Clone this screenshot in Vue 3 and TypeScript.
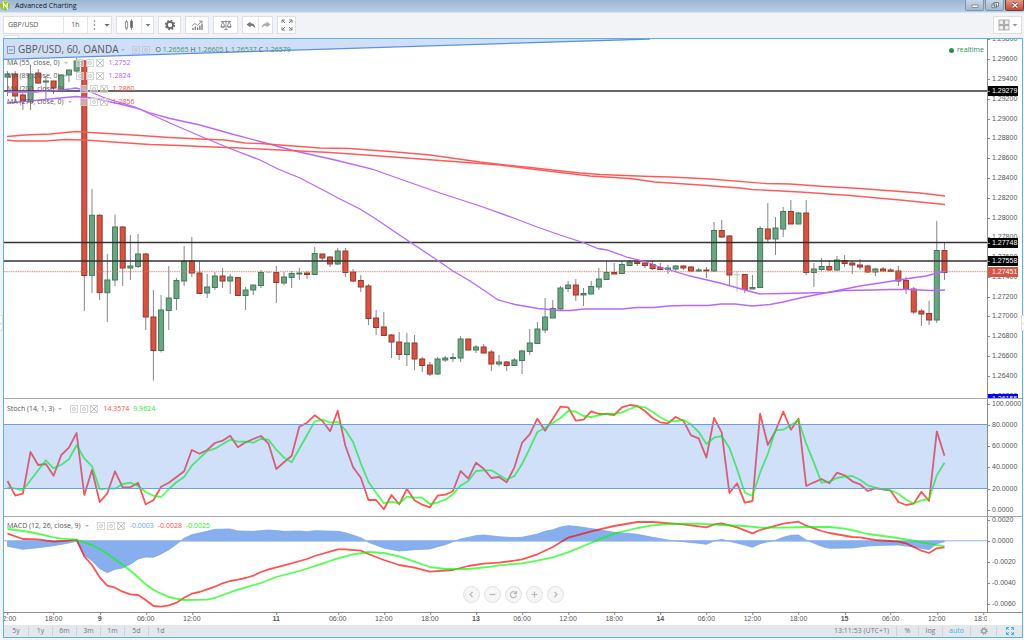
<script setup lang="ts">
import { ref } from 'vue'

type Point = [number, number]
type Candle = [number, number, number, number, 'g' | 'r' | 'n']

const BAR = 7.68
const FIRST = 7.5
const xOf = (i: number): number => FIRST + i * BAR

// high, body top, body bottom, low, colour
const candles: Candle[] = [
  [71, 74, 77, 96, 'g'], [71, 74, 96, 103, 'r'], [93, 95, 101, 110, 'r'], [65, 74, 102, 110, 'g'],
  [69, 73, 83, 84, 'r'], [76, 81, 82, 99, 'g'], [81, 81, 88, 94, 'r'], [74, 75, 89, 90, 'g'],
  [70, 70, 75, 82, 'g'], [58, 61, 71, 77, 'g'], [60, 61, 275.5, 311, 'r'], [189, 215.3, 275.3, 293, 'g'],
  [214, 215.3, 292.6, 300, 'r'], [254, 280, 292.7, 322, 'g'], [214.5, 227, 280, 286, 'g'], [226, 227, 268, 286, 'r'],
  [235, 266, 268, 280, 'g'], [234, 254, 266.5, 268, 'g'], [253, 254, 317, 330, 'r'], [290, 317, 350.5, 380.5, 'r'],
  [295, 310, 350.5, 352.5, 'g'], [266, 298, 310.5, 330, 'g'], [278, 280.5, 298.5, 310, 'g'], [246, 261, 281, 286, 'g'],
  [237, 261, 273, 277, 'r'], [261, 273, 293.5, 294, 'r'], [274, 287, 293, 298, 'g'], [272, 276, 287.5, 290, 'g'],
  [268, 276, 281, 288, 'r'], [274, 277, 281, 294, 'g'], [277, 277.5, 295.5, 296, 'r'], [287, 290, 295.5, 310, 'g'],
  [285, 285, 290, 295, 'g'], [270, 272.5, 285.5, 288, 'g'], [272, 272, 272.5, 273, 'n'], [266, 272.5, 282.5, 303, 'r'],
  [272, 277, 283, 285, 'g'], [271, 273.5, 277.5, 288, 'g'], [268, 273, 274, 280, 'g'], [271, 273, 274.5, 279, 'r'],
  [247, 253.5, 274.5, 275, 'g'], [254, 254, 258, 261, 'r'], [256, 257, 264, 267, 'r'], [248, 251, 264, 265, 'g'],
  [248, 251, 272.5, 277, 'r'], [269, 272, 281, 282, 'r'], [275, 280.5, 287, 292, 'r'], [284, 286, 318.5, 325, 'r'],
  [310, 318, 327.5, 335, 'r'], [312, 327, 335.5, 336, 'r'], [334, 335, 342, 358, 'r'], [332, 342, 354.5, 360, 'r'],
  [333, 343, 354.5, 366, 'g'], [335, 343, 359, 370, 'r'], [357, 359, 365.5, 372, 'r'], [362, 365, 374, 376, 'r'],
  [357, 359, 374, 375, 'g'], [356, 358, 360, 362, 'g'], [353, 357.5, 358.5, 362, 'g'], [336, 339, 358, 362, 'g'],
  [339, 339, 350, 350, 'r'], [345, 347, 350, 353, 'g'], [344, 347, 353, 353, 'r'], [350, 352, 364, 371, 'r'],
  [355, 362, 364, 366.5, 'g'], [361, 362, 365.5, 371, 'r'], [358, 360, 365.5, 366, 'g'], [350, 351, 360.5, 374, 'g'],
  [329, 343, 351.5, 355, 'g'], [322, 329, 343.5, 344, 'g'], [298, 317, 330, 333, 'g'], [300, 308.5, 318, 318, 'g'],
  [286, 288, 309, 311, 'g'], [281, 285, 288.5, 292, 'g'], [279, 285, 295, 301, 'r'], [288, 293.5, 295, 306, 'g'],
  [281, 286.5, 294, 294, 'g'], [268, 279, 287, 290, 'g'], [261, 272.5, 279.5, 280, 'g'], [263, 272.5, 274, 274, 'r'],
  [261, 264.5, 273.5, 274, 'g'], [260, 262, 265.5, 266, 'g'], [260, 262, 263.5, 266, 'r'], [261, 263, 265.5, 268, 'r'],
  [261, 264.5, 268.5, 270, 'r'], [263, 267.5, 269.5, 270, 'r'], [265, 268, 269.5, 274, 'g'], [265, 266, 269, 272, 'g'],
  [265, 266, 268, 270, 'r'], [266, 267, 271, 272, 'r'], [268, 270, 271, 272, 'g'], [267, 270, 271, 278, 'r'],
  [222, 230.5, 271, 272, 'g'], [220, 230.5, 237, 238, 'r'], [235, 236, 275, 285, 'r'], [271, 274.5, 275, 292, 'n'],
  [274, 274.5, 289.5, 293, 'r'], [275, 287.5, 289, 289, 'g'], [226, 228.5, 287.5, 288, 'g'], [203, 229, 239, 242, 'r'],
  [217, 228, 239, 255, 'g'], [207, 211.5, 229, 237, 'g'], [200, 211.5, 224, 224, 'r'], [212, 213, 224, 224, 'g'],
  [200, 213, 272.5, 275, 'r'], [263, 269, 272.5, 287, 'g'], [258, 266.5, 269.5, 271, 'g'], [260, 266.5, 270, 271, 'r'],
  [256, 260, 270, 271, 'g'], [255, 260.5, 263.5, 267, 'r'], [261, 263, 265, 274, 'r'], [259, 265, 267, 270, 'r'],
  [265, 266, 272, 273, 'r'], [268, 269, 272, 276, 'g'], [267, 269, 271, 271, 'r'], [268, 270, 271.5, 272, 'r'],
  [266, 271, 281, 286, 'r'], [277, 280.5, 289.5, 294, 'r'], [287, 289, 312, 314, 'r'], [309, 311, 314, 326, 'r'],
  [301, 313.5, 320, 325, 'r'], [221, 250.5, 320, 323, 'g'], [243, 250.5, 272.5, 280, 'r'],
]

const averages: { tone: string; points: string }[] = [
  { tone: 'purple', points: '7,92 35,92 62,90 76,88 88,91 105,98 135,107 150,114 170,123 200,136 230,148.5 260,160 278,169 300,178 325,191 338,198 360,209 376,219 392,230 410,242 437,260 453,271 470,281 485,291 498,300 515,304.5 538,308.5 560,310.5 570,310.5 584,309 622,309 637,307.5 654,307.5 668,306 684,305.5 708,305.5 721,304 735,304 752,306 770,304.5 783,302 800,298 820,294 840,290 860,286 880,283 905,279 926,276 937,273 945,271.5' },
  { tone: 'purple', points: '7,103 30,101 50,99 76,96.5 95,98.5 120,104 140,109 150,113 170,118.5 200,125 230,133.5 260,141.5 295,151 335,160 372,169 400,179 440,193 480,206 515,218.5 537,227 560,235 583,242.5 598,248.5 607,250 628,257.5 645,261.5 660,267 690,276 720,283 745,290 760,294 783,293.5 828,292.5 843,290.5 875,290 890,289.5 910,289.5 930,290.5 945,290' },
  { tone: 'red', points: '7,136.5 25,135 50,134 76,131.5 90,132.5 125,134.5 170,137.5 200,139 225,140 245,143 260,143.5 320,148 350,148.5 390,151.5 430,155 480,162 530,167.5 580,173 600,174.5 650,176.5 670,177 710,179 766,183.5 790,184 825,186.5 860,188.5 920,193 945,196' },
  { tone: 'red', points: '7,140 15,141 45,141 65,139.5 85,140 120,142.5 150,144.5 180,145.5 200,146.5 240,148 260,149 330,152.5 380,156 440,160.5 500,165 540,170 590,176 630,178.5 655,182 700,185 740,188 752,189.5 800,192 850,195.5 900,200 930,203 945,204.5' },
]

// Indicator samples are stored at three steps per unit below y = 395.
const yOf = (v: number): number => 395 + v / 3
const lineOf = (pts: Point[]): string => pts.map(([i, v]) => `${xOf(i).toFixed(1)},${yOf(v).toFixed(1)}`).join(' ')
const indexed = (values: number[]): Point[] => values.map((v, i): Point => [i, v])

const stochK = lineOf(indexed([
  258, 302, 296, 171, 210, 207, 242, 180, 158, 114, 300, 225, 321, 295, 229, 277, 277, 263, 328, 316,
  275, 263, 246, 229, 165, 176, 165, 144, 137, 122, 157, 142, 132, 123, 146, 222, 202, 182, 95, 83,
  61, 78, 109, 47, 152, 217, 248, 315, 315, 343, 300, 328, 282, 316, 329, 337, 302, 299, 289, 228,
  251, 203, 221, 249, 246, 262, 217, 143, 118, 71, 107, 71, 35, 37, 77, 74, 49, 57, 57, 60,
  37, 30, 33, 48, 69, 82, 85, 66, 77, 121, 130, 188, 69, 112, 294, 265, 323, 318, 56, 150,
  108, 50, 104, 71, 273, 262, 252, 265, 233, 241, 259, 268, 288, 280, 283, 287, 321, 330, 326, 290,
  318, 109, 182,
]))
const stochD = lineOf(indexed([
  278, 281, 285, 256, 226, 196, 220, 209, 193, 151, 190, 214, 283, 281, 281, 267, 263, 273, 291, 302,
  306, 282, 262, 246, 212, 190, 168, 161, 148, 134, 140, 140, 143, 132, 134, 164, 188, 202, 161, 121,
  79, 74, 83, 80, 105, 141, 205, 261, 293, 325, 320, 325, 305, 308, 308, 327, 323, 314, 298, 272,
  258, 228, 226, 226, 239, 254, 243, 207, 160, 111, 99, 83, 69, 48, 50, 63, 66, 61, 56, 57,
  52, 42, 34, 37, 51, 67, 79, 78, 75, 88, 111, 147, 128, 123, 158, 223, 293, 303, 233, 177,
  106, 104, 91, 75, 146, 203, 263, 260, 249, 245, 243, 254, 271, 278, 283, 286, 296, 314, 325, 316,
  312, 241, 203,
]))

const macd = lineOf([
  [0, 416], [2, 432], [4, 433], [6, 440], [8, 437], [9, 434], [10, 484], [11, 510], [12, 547], [13, 572], [14, 578],
  [15, 590], [16, 598], [17, 600], [18, 615], [19, 633], [20, 635], [21, 631], [22, 623], [23, 608], [24, 596],
  [25, 591], [26, 583], [27, 575], [28, 565], [29, 558], [30, 554], [31, 549], [32, 542], [33, 531], [34, 523],
  [36, 511], [39, 492], [40, 483], [43, 463], [44, 463], [46, 467], [47, 477], [49, 495], [51, 510], [53, 518],
  [55, 530], [58, 525], [60, 513], [62, 506], [64, 503], [66, 497], [67, 493], [69, 478], [71, 456], [73, 428],
  [74, 422], [76, 409], [79, 393], [82, 381], [84, 381], [88, 388], [89, 391], [91, 397], [92, 388], [93, 385],
  [95, 397], [97, 415], [98, 405], [101, 386], [103, 380], [104, 392], [106, 408], [107, 414], [110, 426],
  [111, 427], [113, 435], [116, 440], [117, 445], [119, 467], [120, 474], [121, 460], [122, 457],
])
const signal = lineOf([
  [0, 402], [3, 411], [6, 427], [7, 431], [9, 434], [10, 442], [11, 450], [12, 462], [13, 476], [14, 493], [15, 509],
  [16, 527], [17, 547], [18, 568], [19, 584], [20, 596], [21, 606], [22, 611], [23, 615], [26, 614], [27, 609],
  [28, 600], [30, 584], [33, 564], [35, 546], [38, 528], [41, 506], [43, 490], [45, 478], [47, 471], [49, 474],
  [51, 484], [53, 500], [55, 516], [57, 522], [60, 522], [63, 515], [64, 511], [67, 505], [69, 497], [71, 487],
  [73, 472], [75, 453], [77, 434], [79, 416], [82, 399], [84, 391], [86, 387], [90, 386], [93, 390], [96, 393],
  [98, 398], [101, 398], [104, 396], [107, 396], [109, 401], [111, 411], [112, 417], [115, 426], [118, 437],
  [119, 442], [120, 446], [122, 454],
])
const histogram = lineOf([
  [0, 438], [0, 454], [2, 463], [4, 458], [6, 452], [8, 444], [9, 439], [10, 481], [11, 497], [12, 521], [13, 533],
  [14, 523], [15, 519], [16, 508], [17, 492], [18, 486], [19, 487], [20, 477], [21, 464], [22, 448], [23, 430],
  [24, 419], [26, 409], [27, 403], [29, 402], [30, 408], [32, 409], [34, 405], [36, 409], [38, 408], [39, 410],
  [40, 407], [43, 409], [44, 413], [46, 428], [47, 442], [49, 459], [51, 468], [53, 464], [55, 462], [56, 455],
  [57, 449], [58, 440], [59, 432], [61, 422], [62, 420], [64, 425], [66, 428], [67, 427], [69, 417], [70, 409],
  [71, 404], [72, 396], [73, 392], [74, 394], [77, 404], [79, 412], [82, 418], [84, 427], [86, 435], [87, 438],
  [88, 440], [90, 445], [91, 448], [92, 438], [93, 433], [94, 439], [96, 450], [97, 457], [98, 446], [99, 440],
  [100, 436], [101, 427], [102, 421], [103, 420], [104, 435], [105, 445], [106, 454], [107, 460], [110, 459],
  [112, 453], [114, 451], [116, 450], [118, 456], [120, 464], [121, 446], [122, 440], [122, 438],
])

interface Tick { text: string; at: number }
const MAIN = { top: 39, height: 359 }
const STOCH = { top: 399, height: 117 }
const MACD = { top: 517, height: 95 }
const pct = (y: number, pane: { top: number; height: number }) => ({ top: `${((y - pane.top) / pane.height) * 100}%` })

const priceTicks: Tick[] = Array.from({ length: 19 }, (_, k) => ({
  text: (1.298 - k * 0.002).toFixed(5),
  at: 39.5 + k * 19.78,
}))
const tags = [
  { text: '1.29279', at: 91, tone: 'black' },
  { text: '1.27748', at: 242.5, tone: 'black' },
  { text: '1.27558', at: 261, tone: 'black' },
  { text: '1.27451', at: 272, tone: 'last' },
  { text: '1.26155', at: 399, tone: 'blue' },
]
const stochTicks: Tick[] = [
  { text: '100.0000', at: 403.5 }, { text: '80.0000', at: 424.7 }, { text: '60.0000', at: 446 },
  { text: '40.0000', at: 467.4 }, { text: '20.0000', at: 488.6 }, { text: '0.0000', at: 510 },
]
const macdTicks: Tick[] = [
  { text: '0.0020', at: 519.5 }, { text: '0.0000', at: 540.8 }, { text: '-0.0020', at: 562 },
  { text: '-0.0040', at: 583 }, { text: '-0.0060', at: 604.3 },
]
const times: { text: string; bar: number; day?: boolean }[] = [
  { text: '12:00', bar: 0 }, { text: '18:00', bar: 6 }, { text: '9', bar: 12, day: true }, { text: '06:00', bar: 18 },
  { text: '12:00', bar: 24 }, { text: '11', bar: 35, day: true }, { text: '06:00', bar: 43 }, { text: '12:00', bar: 49 },
  { text: '18:00', bar: 55 }, { text: '13', bar: 61, day: true }, { text: '06:00', bar: 67 }, { text: '12:00', bar: 73 },
  { text: '18:00', bar: 79 }, { text: '14', bar: 85, day: true }, { text: '06:00', bar: 91 }, { text: '12:00', bar: 97 },
  { text: '18:00', bar: 103 }, { text: '15', bar: 109, day: true }, { text: '06:00', bar: 115 }, { text: '12:00', bar: 121 },
  { text: '18:00', bar: 127 },
]
const timeLeft = (bar: number) => ({ left: `${((xOf(bar) - 4) / 983) * 100}%` })

const studies = [
  { name: 'MA (55, close, 0)', value: '1.2752', tone: 'purple' },
  { name: 'MA (89, close, 0)', value: '1.2824', tone: 'purple' },
  { name: 'MA (200, close, 0)', value: '1.2860', tone: 'red' },
  { name: 'MA (279, close, 0)', value: '1.2856', tone: 'red' },
]
const ohlc = [['O', '1.26565'], ['H', '1.26605'], ['L', '1.26537'], ['C', '1.26579']]
const icons = ['eye', 'gear', 'close']
const ranges = ['5y', '1y', '6m', '3m', '1m', '5d', '1d']
const nav = [
  { name: 'Scroll left', d: 'M9.5 6 7 8.500l2.500 2.500' },
  { name: 'Zoom out', d: 'M5.500 8.500h6' },
  { name: 'Reset', d: 'M11 7.200A3 3 0 1 0 11.300 9.500M11.400 5v2.600H8.800' },
  { name: 'Zoom in', d: 'M5.500 8.500h6M8.500 5.500v6' },
  { name: 'Scroll right', d: 'M7.500 6 10 8.500 7.500 11' },
]
const symbol = ref('GBP/USD')
</script>

<template>
  <div class="window">
    <header class="titlebar">
      <svg class="logo" viewBox="0 0 12 12" aria-hidden="true">
        <circle cx="5" cy="5.500" r="4.800" fill="#8fc31f" />
        <path d="M1 3.500C3 1 7 .5 9 3" fill="none" stroke="#c9e67a" />
        <path d="M3.500 8.500V3.200l3.600 5V3" fill="none" stroke="#fff" stroke-width="1.300" />
      </svg>
      <h1>Advanced Charting</h1>
      <div class="controls">
        <button type="button" aria-label="Minimize"><svg viewBox="0 0 18 10"><rect x="6" y="5" width="6" height="2.500" rx=".5" fill="#fff" stroke="#56667a" stroke-width=".7" /></svg></button>
        <button type="button" aria-label="Restore"><svg viewBox="0 0 18 10"><path d="M8 2.500h4.500v3.700H8zM6 4h4.500v3.700H6z" fill="#fff" stroke="#56667a" stroke-width=".8" /><path d="M7.500 5.800h1.600" stroke="#56667a" /></svg></button>
        <button type="button" class="shut" aria-label="Close"><svg viewBox="0 0 18 10"><path d="m6.500 3 5 4.500m0-4.500-5 4.500" stroke="#6b2c28" stroke-width="2.600" /><path d="m6.500 3 5 4.500m0-4.500-5 4.500" stroke="#fff" stroke-width="1.500" /></svg></button>
      </div>
    </header>

    <div class="toolbar">
      <div class="group">
        <input v-model="symbol" class="symbol" type="text" aria-label="Symbol" />
        <button type="button" class="w24">1h</button>
        <button type="button" class="w24" aria-label="Intervals">
          <svg viewBox="0 0 22 16" width="22" height="16"><g fill="#666"><circle cx="5.500" cy="4" r=".8" /><circle cx="5.500" cy="8" r=".8" /><circle cx="5.500" cy="12" r=".8" /><path d="M15.500 7h5L18 9.500z" /></g></svg>
        </button>
      </div>
      <div class="group">
        <button type="button" class="w24" aria-label="Bar style">
          <svg viewBox="0 0 12 12" width="12" height="12"><path d="M3.500 1v10M8.500 0v11" stroke="#777" stroke-width=".8" /><rect x="2.300" y="3" width="2.400" height="6" fill="#fff" stroke="#777" stroke-width=".8" /><rect x="7.200" y="1.800" width="2.600" height="7" fill="#666" /></svg>
        </button>
        <button type="button" class="w12" aria-label="More bar styles"><svg viewBox="0 0 6 6" width="6" height="6"><path d="M.5 2h5L3 4.500z" fill="#777" /></svg></button>
      </div>
      <div class="group">
        <button type="button" class="w21" aria-label="Properties">
          <svg viewBox="0 0 12 12" width="12" height="12"><circle cx="6" cy="6" r="3.100" fill="none" stroke="#666" stroke-width="1.800" /><circle cx="6" cy="6" r="4.500" fill="none" stroke="#666" stroke-width="1.400" stroke-dasharray="1.800 1.734" /></svg>
        </button>
      </div>
      <div class="group">
        <button type="button" class="w22" aria-label="Indicators">
          <svg viewBox="0 0 12 12" width="12" height="12" fill="none" stroke="#777"><path d="M2 11V8.800M4.300 11V7.500M6.600 11V8.500M8.900 11V6.500M11 11V4.800" stroke-width="1.300" /><path d="m.8 7 3-2.500 2.700 2L10.500 2.500M8 2h3v2.500" stroke-width=".8" /></svg>
        </button>
      </div>
      <div class="group">
        <button type="button" class="w23" aria-label="Compare">
          <svg viewBox="0 0 12 12" width="12" height="12" fill="none" stroke="#777" stroke-width=".8"><path d="M1 2.500h10M6 1.500v9M4.300 10.500h3.400M2.800 2.500.9 7.500h3.900zM9.200 2.500 7.300 7.500h3.900z" /><path d="M.9 7.800c.6 1.300 3.200 1.300 3.900 0M7.300 7.800c.6 1.300 3.200 1.300 3.900 0" /></svg>
        </button>
      </div>
      <div class="group">
        <button type="button" class="w15" aria-label="Undo"><svg viewBox="0 0 10 8" width="10" height="8"><path d="M4.500.5.5 3.500l4 3V4.700c2 0 3.500.4 4.800 2.500C9 4 7.500 2.400 4.500 2.300z" fill="#777" /></svg></button>
        <button type="button" class="w14" aria-label="Redo"><svg viewBox="0 0 10 8" width="10" height="8"><path d="m5.500.5 4 3-4 3V4.700C3.500 4.700 2 5.100.7 7.200 1 4 2.500 2.400 5.500 2.300z" fill="#aaa" /></svg></button>
      </div>
      <div class="group">
        <button type="button" class="w17" aria-label="Full screen">
          <svg viewBox="0 0 12 12" width="12" height="12" fill="none" stroke="#777" stroke-width="1"><path d="M1 3.800V1h2.800M8.200 1H11v2.800M11 8.200V11H8.200M3.800 11H1V8.200M1 1l3 3M11 1 8 4M11 11 8 8M1 11l3-3" /></svg>
        </button>
      </div>
      <button type="button" class="layout" aria-label="Layout">
        <svg viewBox="0 0 20 12" width="20" height="12"><g fill="#eee" stroke="#999" stroke-width=".8"><rect x="1" y="1" width="4.500" height="4.500" /><rect x="6.500" y="1" width="4.500" height="4.500" /><rect x="1" y="6.500" width="4.500" height="4.500" /><rect x="6.500" y="6.500" width="4.500" height="4.500" /></g><path d="M14.500 5h5L17 7.500z" fill="#999" /></svg>
      </button>
      <span class="tab-top"></span>
    </div>

    <main class="frame">
      <section class="pane price">
        <div class="plot">
          <svg viewBox="4 39 983 359" preserveAspectRatio="none" role="img" aria-label="GBP/USD hourly candles">
            <polygon points="4,39 650,39 4,59.300" fill="#d0dff8" />
            <line x1="4" y1="59.300" x2="650" y2="39" stroke="#5e90e6" stroke-width="1.300" />
            <g v-for="(c, i) in candles" :key="i" :class="['candle', c[4]]">
              <line :x1="xOf(i)" :x2="xOf(i)" :y1="c[0]" :y2="c[3]" />
              <rect :x="xOf(i) - 2.500" :y="c[1]" width="5" :height="c[2] - c[1]" />
            </g>
            <g stroke="#333" stroke-width="1.500">
              <line x1="4" x2="987" y1="91" y2="91" />
              <line x1="4" x2="987" y1="242.500" y2="242.500" />
              <line x1="4" x2="987" y1="261" y2="261" />
            </g>
            <line x1="4" x2="987" y1="271.700" y2="271.700" stroke="#e0705f" stroke-width=".8" stroke-dasharray="1.500 .8" />
            <polyline v-for="(a, i) in averages" :key="'a' + i" :points="a.points" :class="['avg', a.tone]" />
          </svg>
          <div class="legend">
            <div class="row main">
              <svg viewBox="0 0 8 8" width="8" height="8"><rect x=".5" y=".5" width="7" height="7" fill="none" stroke="#7d879a" stroke-width=".8" /><path d="M2 4h4" stroke="#7d879a" /></svg>
              <strong>GBP/USD, 60, OANDA</strong>
              <i class="caret"></i>
              <span class="tools">
                <button v-for="k in icons.slice(0, 2)" :key="k" type="button" :aria-label="k" :class="['tool', k]"></button>
              </span>
              <span class="ohlc"><span v-for="o in ohlc" :key="o[0]">{{ o[0] }} <b>{{ o[1] }}</b></span></span>
            </div>
            <div v-for="s in studies" :key="s.name" class="row">
              <span>{{ s.name }}</span><i class="caret"></i>
              <span class="tools"><button v-for="k in icons" :key="k" type="button" :aria-label="k" :class="['tool', k]"></button></span>
              <span :class="['num', s.tone]">{{ s.value }}</span>
            </div>
          </div>
          <span class="realtime">realtime</span>
        </div>
        <div class="axis">
          <span v-for="t in priceTicks" :key="t.text" class="tick" :style="pct(t.at, MAIN)">{{ t.text }}</span>
          <span v-for="t in tags" :key="t.text" :class="['tag', t.tone]" :style="pct(t.at, MAIN)">{{ t.text }}</span>
        </div>
      </section>

      <section class="pane stoch">
        <div class="plot">
          <svg viewBox="4 399 983 117" preserveAspectRatio="none" role="img" aria-label="Stochastic oscillator">
            <polyline :points="stochK" class="ind red" />
            <polyline :points="stochD" class="ind green" />
            <rect x="4" y="424.500" width="983" height="64" fill="#4f86e6" fill-opacity=".26" />
            <path d="M4 424.500h983M4 488.500h983" stroke="#6d9de8" />
          </svg>
          <div class="legend">
            <div class="row">
              <span>Stoch (14, 1, 3)</span><i class="caret"></i>
              <span class="tools"><button v-for="k in icons" :key="k" type="button" :aria-label="k" :class="['tool', k]"></button></span>
              <span class="num red">14.3574</span><span class="green">9.9624</span>
            </div>
          </div>
        </div>
        <div class="axis">
          <span v-for="t in stochTicks" :key="t.text" class="tick" :style="pct(t.at, STOCH)">{{ t.text }}</span>
        </div>
      </section>

      <section class="pane macd">
        <div class="plot">
          <svg viewBox="4 517 983 95" preserveAspectRatio="none" role="img" aria-label="MACD">
            <polygon :points="histogram" fill="#87afee" stroke="#7ba6ea" stroke-width=".8" />
            <line x1="4" x2="987" y1="540.800" y2="540.800" stroke="#8db4f0" />
            <polyline :points="macd" class="ind red" />
            <polyline :points="signal" class="ind green" />
          </svg>
          <div class="legend">
            <div class="row">
              <span>MACD (12, 26, close, 9)</span><i class="caret"></i>
              <span class="tools"><button v-for="k in icons" :key="k" type="button" :aria-label="k" :class="['tool', k]"></button></span>
              <span class="num blue">-0.0003</span><span class="red">-0.0028</span><span class="green">-0.0025</span>
            </div>
          </div>
        </div>
        <div class="axis">
          <span v-for="t in macdTicks" :key="t.text" class="tick" :style="pct(t.at, MACD)">{{ t.text }}</span>
        </div>
        <nav class="navigator" aria-label="Chart navigation">
          <button v-for="n in nav" :key="n.name" type="button" :aria-label="n.name">
            <svg viewBox="0 0 17 17" width="17" height="17"><circle cx="8.500" cy="8.500" r="8" fill="#f6f6f6" stroke="#d8d8d8" stroke-width=".8" /><path :d="n.d" fill="none" stroke="#b8b8b8" stroke-width="1.200" /></svg>
          </button>
        </nav>
      </section>

      <div class="timeline">
        <div class="times">
          <span v-for="t in times" :key="t.bar" :class="{ day: t.day }" :style="timeLeft(t.bar)">{{ t.text }}</span>
        </div>
      </div>

      <footer class="bottom">
        <div class="ranges"><button v-for="r in ranges" :key="r" type="button">{{ r }}</button></div>
        <div class="options">
          <time>13:11:53 (UTC+1)</time>
          <button type="button" class="w22">%</button>
          <button type="button" class="w24">log</button>
          <button type="button" class="w28 on">auto</button>
          <button type="button" class="w26" aria-label="Scale settings"><svg viewBox="0 0 8 8" width="8" height="8" fill="none" stroke="#777"><circle cx="4" cy="4" r="2.200" /><circle cx="4" cy="4" r="3.300" stroke-dasharray="1 1.592" /></svg></button>
          <button type="button" class="w26" aria-label="Maximize chart"><svg viewBox="0 0 8 8" width="8" height="8" fill="none" stroke="#36b5e8"><path d="M.5 3V.5H3M5 .5h2.500V3M7.500 5v2.500H5M3 7.500H.5V5M.5.5l2.300 2.300M7.500.5 5.200 2.800M7.500 7.500 5.200 5.200M.5 7.500l2.300-2.300" /></svg></button>
        </div>
      </footer>
    </main>
    <button type="button" class="drawer left" aria-label="Drawing panel">‹</button>
    <button type="button" class="drawer right" aria-label="Side panel">‹</button>
  </div>
</template>

<style>
body { margin: 0; }
</style>

<style scoped>
.window {
  position: relative;
  display: flex;
  flex-direction: column;
  height: 100vh;
  overflow: hidden;
  background: #f1f3f6;
  color: #555;
  font: 7px/12px "Open Sans", "Noto Sans", sans-serif;
}
svg { display: block; }
button, input { margin: 0; padding: 0; border: 0; background: none; color: inherit; font: inherit; border-radius: 0; }
button { display: flex; align-items: center; justify-content: center; }
.titlebar { display: flex; align-items: flex-start; height: 13px; background: linear-gradient(#9cb5d2, #b7cfe9); border-bottom: 1px solid #dbe5ef; box-sizing: border-box; }
.logo { width: 12px; height: 12px; margin-right: 3px; }
h1 { flex: 1; margin: 0; font-size: 7px; line-height: 12px; font-weight: 400; color: #101820; }
.controls { display: flex; gap: 1px; }
.controls button { width: 19px; height: 11px; box-sizing: border-box; border: 1px solid #8294aa; border-top: 0; border-radius: 0 0 2px 2px; background: linear-gradient(#c7d6e8, #a4b8d0); }
.controls .shut { border-color: #7b3a36; background: linear-gradient(#df9a8c, #c44a35); }
.controls svg { width: 18px; height: 10px; flex: none; }

.toolbar { position: relative; display: flex; align-items: flex-start; gap: 4px; height: 25px; padding: 3px 2px 0 3px; box-sizing: border-box; }
.group { display: flex; height: 18px; box-sizing: border-box; border: 1px solid #dcdfe3; background: #fff; }
.group > * + * { border-left: 1px solid #e3e5e8; box-sizing: border-box; }
.symbol { width: 59px; padding-left: 4px; box-sizing: border-box; outline: 0; }
.w12 { width: 12px; } .w14 { width: 14px; } .w15 { width: 15px; } .w17 { width: 17px; } .w21 { width: 21px; }
.w22 { width: 22px; } .w23 { width: 23px; } .w24 { width: 24px; } .w26 { width: 26px; } .w28 { width: 28px; }
.group button { height: 16px; }
.layout { margin-left: auto; width: 29px; height: 18px; border: 1px solid #dcdfe3; background: #fff; }
.tab-top { position: absolute; left: 4px; bottom: 0; width: 15px; height: 3px; box-sizing: border-box; border: 1px solid #dde0e4; border-bottom: 0; background: #fff; }

.frame { flex: 1; display: flex; flex-direction: column; min-height: 0; margin: 0 1px 2px 3px; border: 1px solid #5fb2d8; background: #fff; }
.pane { position: relative; display: flex; min-height: 0; }
.price { flex: 359 1 0; }
.stoch { flex: 117 1 0; border-top: 1px solid #a8a8a8; }
.macd { flex: 95 1 0; border-top: 1px solid #a8a8a8; }
.plot { position: relative; flex: 1; min-width: 0; overflow: hidden; }
.plot > svg { position: absolute; inset: 0; width: 100%; height: 100%; }
.axis { position: relative; width: 35px; overflow: hidden; border-left: 1px solid #8c8c8c; box-sizing: border-box; font: 7px/10px "Liberation Sans", sans-serif; color: #555; }
.tick, .tag { position: absolute; left: 0; height: 10px; margin-top: -5px; padding-left: 4px; white-space: nowrap; }
.tick::before, .tag::before { content: ""; position: absolute; left: 0; top: 5px; width: 2px; height: 1px; background: #888; }
.tag { width: 26px; color: #fff; background: #000; }
.tag.last { background: #d75442; }
.tag.blue { background: #00f; }

.candle line { stroke: #85858a; stroke-width: 1; }
.candle rect { stroke-width: 1; }
.candle.g rect { fill: #6ba583; stroke: #447a5b; }
.candle.r rect { fill: #d75442; stroke: #96382c; }
.candle.n line { stroke-opacity: .5; }
.candle.n rect { stroke: #b4d2c1; fill: #b4d2c1; stroke-width: .6; }
.avg { fill: none; stroke-width: 1.3; }
.avg.purple { stroke: #b966ff; }
.avg.red { stroke: #ff5a5a; }
.ind { fill: none; stroke-width: 1.8; stroke-linejoin: round; stroke-opacity: .68; }
.ind.red { stroke: #f00; }
.ind.green { stroke: #0f0; }

.legend { position: absolute; left: 3px; top: 4px; }
.stoch .legend { top: 3px; }
.macd .legend { top: 2px; }
.row { display: flex; align-items: center; gap: 4px; height: 13px; line-height: 13px; white-space: nowrap; }
.row.main { gap: 3px; }
.row strong { font-size: 10px; font-weight: 400; }
.caret { width: 0; height: 0; border: 2px solid transparent; border-top-color: #b5b5b5; border-bottom: 0; }
.tools { display: flex; gap: 2px; margin-left: 4px; }
.tool { width: 8px; height: 8px; border: 1px solid #d2d2d2; background: rgba(255, 255, 255, .5); box-sizing: border-box; opacity: .9; }
.main .tool { background: none; border-color: #bccadf; }
.tool::before { content: ""; width: 4px; height: 4px; box-sizing: border-box; border: 1px solid #c2c2c2; border-radius: 50%; }
.tool.close::before { width: 6px; height: 6px; border: 0; border-radius: 0; background: linear-gradient(45deg, transparent 42%, #bbb 42% 58%, transparent 58%), linear-gradient(-45deg, transparent 42%, #bbb 42% 58%, transparent 58%); }
.ohlc { display: flex; gap: 2px; margin-left: 2px; }
.ohlc b { font-weight: 400; color: #4f9069; }
.num { margin-left: 1px; }
.row .purple { color: #b45cff; } .row .red { color: #ff4d4d; } .row .green { color: #2bea2b; } .row .blue { color: #6f9fe8; }
.realtime { position: absolute; right: 3px; top: 5px; display: flex; align-items: center; gap: 3px; color: #2e8b57; }
.realtime::before { content: ""; width: 5px; height: 5px; border-radius: 50%; background: #2e8b57; }

.navigator { position: absolute; left: 0; right: 0; bottom: 9px; display: flex; justify-content: center; gap: 4px; pointer-events: none; }
.navigator button { pointer-events: auto; }

.timeline { display: flex; height: 12px; border-top: 1px solid #8c8c8c; font: 7px/12px "Liberation Sans", sans-serif; }
.times { position: relative; flex: 1; margin-right: 35px; overflow: hidden; }
.times span { position: absolute; top: 0; transform: translateX(-50%); }
.times span::before { content: ""; position: absolute; left: 50%; top: 0; width: 1px; height: 2px; background: #888; }
.times .day { font-weight: 700; }

.bottom { display: flex; justify-content: space-between; height: 12px; background: #e4e8ed; color: #777; }
.ranges, .options { display: flex; align-items: center; }
.ranges button, .options button { height: 10px; border-left: 1px solid #cfd3d8; box-sizing: border-box; }
.ranges button { width: 24px; }
.ranges button:first-child { border: 0; }
.options time { margin-right: 7px; }
.options .on { color: #36b5e8; }

.drawer { position: absolute; top: 315px; height: 16px; width: 3px; border: 1px solid #dde0e4; background: #fff; font-size: 6px; color: #999; overflow: hidden; box-sizing: border-box; }
.drawer.left { left: 0; border-left: 0; }
.drawer.right { right: 0; border-right: 0; }
</style>
